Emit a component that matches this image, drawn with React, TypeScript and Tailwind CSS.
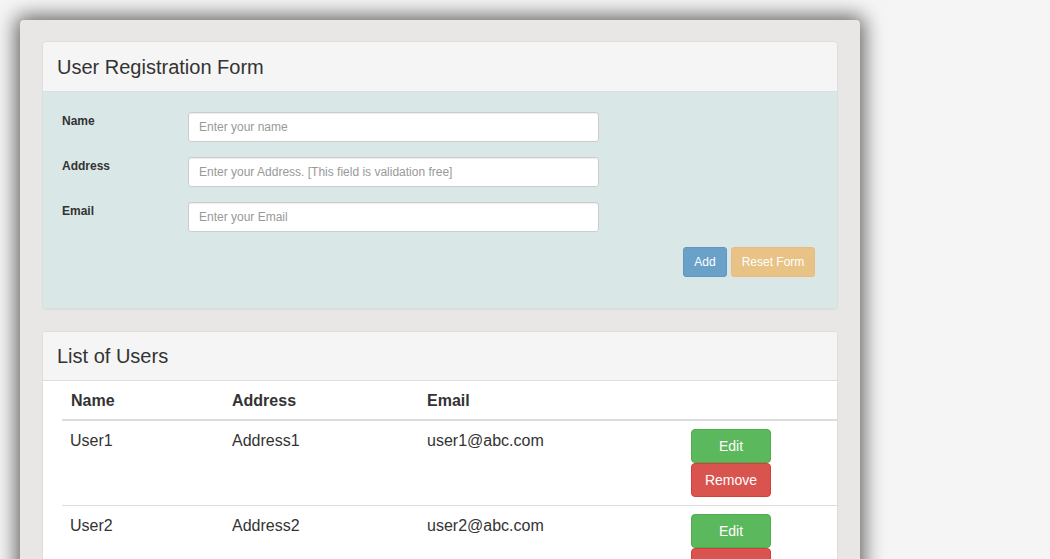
import React from "react";

const users = [
  { name: "User1", address: "Address1", email: "user1@abc.com" },
  { name: "User2", address: "Address2", email: "user2@abc.com" },
];

function Field({ label, placeholder }: { label: string; placeholder: string }) {
  return (
    <div className="flex h-[30px]">
      <label className="w-[126px] pt-[1px] text-[12px] font-bold leading-[16px] text-[#333]">{label}</label>
      <input
        className="h-[30px] w-[411px] rounded-[3px] border border-[#ccc] bg-white px-[10px] text-[12px] text-[#555] placeholder:text-[#999] shadow-[inset_0_1px_1px_rgba(0,0,0,0.075)] outline-none"
        placeholder={placeholder}
      />
    </div>
  );
}

export default function App() {
  return (
    <div
      className="h-[559px] w-[1050px] overflow-hidden bg-[#f5f5f5] pl-[20px] pt-[20px] text-[#333]"
      style={{ fontFamily: '"Liberation Sans", Arial, sans-serif' }}
    >
      <div className="w-[840px] rounded-[4px] bg-[#e8e7e5] px-[22px] pt-[21px] shadow-[0_0_20px_4px_rgba(0,0,0,0.6)]">
        {/* Panel 1 */}
        <div className="overflow-hidden rounded-[4px] border border-[#ddd] shadow-[0_1px_1px_rgba(0,0,0,0.05)]">
          <div className="flex h-[50px] items-center border-b border-[#ddd] bg-[#f5f5f5] px-[14px]">
            <h3 className="text-[20px] font-light text-[#333]">User Registration Form</h3>
          </div>
          <div className="bg-[#dae7e7] px-[19px] pb-[31px] pt-[20px]">
            <div className="flex flex-col gap-[15px]">
              <Field label="Name" placeholder="Enter your name" />
              <Field label="Address" placeholder="Enter your Address. [This field is validation free]" />
              <Field label="Email" placeholder="Enter your Email" />
            </div>
            <div className="mt-[15px] flex justify-end gap-[4px] pr-[3px]">
              <button className="h-[30px] w-[44px] rounded-[3px] border border-[#6296bd] bg-[#6aa1c9] text-[12px] text-white">
                Add
              </button>
              <button className="h-[30px] w-[84px] rounded-[3px] border border-[#e5bd7c] bg-[#e9c385] text-[12px] text-white">
                Reset Form
              </button>
            </div>
          </div>
        </div>

        {/* Panel 2 */}
        <div className="mt-[22px] overflow-hidden rounded-t-[4px] border border-[#ddd] bg-white">
          <div className="flex h-[49px] items-center border-b border-[#ddd] bg-[#f5f5f5] px-[14px]">
            <h3 className="text-[20px] font-light text-[#333]">List of Users</h3>
          </div>
          <div className="pl-[19px]">
            <table className="w-full border-collapse text-[16px] leading-[22px]">
              <thead>
                <tr className="border-b-2 border-[#ddd]">
                  <th className="w-[162px] pb-[7px] pl-[9px] pr-[8px] pt-[9px] text-left font-bold">Name</th>
                  <th className="w-[195px] px-[8px] pb-[7px] pt-[9px] text-left font-bold">Address</th>
                  <th className="w-[264px] px-[8px] pb-[7px] pt-[9px] text-left font-bold">Email</th>
                  <th className="p-[8px] text-left"></th>
                </tr>
              </thead>
              <tbody>
                {users.map((u) => (
                  <tr key={u.name} className="border-b border-[#ddd] align-top">
                    <td className="px-[8px] pt-[9px]">{u.name}</td>
                    <td className="px-[8px] pt-[9px]">{u.address}</td>
                    <td className="px-[8px] pt-[9px]">{u.email}</td>
                    <td className="p-[8px]">
                      <button className="block h-[34px] w-[80px] rounded-[4px] border border-[#4cae4c] bg-[#5cb85c] text-[14px] text-white">
                        Edit
                      </button>
                      <button className="block h-[34px] w-[80px] rounded-[4px] border border-[#d43f3a] bg-[#d9534f] text-[14px] text-white">
                        Remove
                      </button>
                    </td>
                  </tr>
                ))}
              </tbody>
            </table>
          </div>
        </div>
      </div>
    </div>
  );
}
